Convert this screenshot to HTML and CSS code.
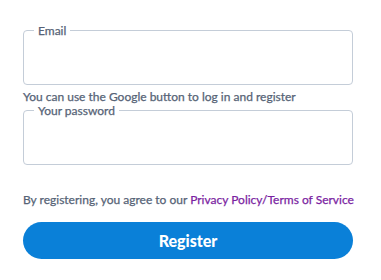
FILE: index.html
```html
<!DOCTYPE html>
<html>
<head>
<meta charset="utf-8">
<link rel="stylesheet" href="styles.css">
</head>
<body>
<form class="form">
  <fieldset class="field field-email">
    <legend class="legend">Email</legend>
    <input class="input" type="email">
  </fieldset>
  <p class="hint">You can use the Google button to log in and register</p>
  <fieldset class="field">
    <legend class="legend">Your password</legend>
    <input class="input" type="password">
  </fieldset>
  <p class="terms">By registering, you agree to our <a class="link" href="#">Privacy Policy/Terms of Service</a></p>
  <button class="btn" type="button">Register</button>
</form>
</body>
</html>
```
FILE: styles.css
```css
html, body {
  margin: 0;
  padding: 0;
  background: #ffffff;
}
body {
  font-family: Lato, "Noto Sans", sans-serif;
  color: #566376;
}
.form {
  display: flex;
  flex-direction: column;
  width: 330px;
  margin-left: 23px;
  padding-top: 24px;
}
.field {
  margin: 0;
  padding: 0 10px 0 10px;
  border: 1px solid #c4cdd8;
  border-radius: 4px;
  height: 61px;
  box-sizing: border-box;
  min-width: 0;
}
.legend {
  padding: 0 4px;
  font-size: 12px;
  line-height: 13px;
  color: #566376;
  -webkit-text-stroke: 0.25px currentColor;
}
.input {
  display: block;
  width: 100%;
  height: 40px;
  border: 0;
  outline: none;
  background: transparent;
  padding: 0;
  font: inherit;
}
.hint {
  margin: 5px 0 0;
  font-size: 12px;
  line-height: 14px;
  -webkit-text-stroke: 0.25px currentColor;
}
.terms {
  margin: 28px 0 0;
  font-size: 12px;
  line-height: 14px;
  white-space: nowrap;
  -webkit-text-stroke: 0.25px currentColor;
}
.link {
  color: #7b1fa2;
  text-decoration: none;
}
.btn {
  margin-top: 15px;
  height: 37px;
  border: 0;
  border-radius: 19px;
  background: #0a80d8;
  color: #ffffff;
  font-family: Lato, "Noto Sans", sans-serif;
  font-weight: 900;
  font-size: 16px;
  cursor: pointer;
}
```
